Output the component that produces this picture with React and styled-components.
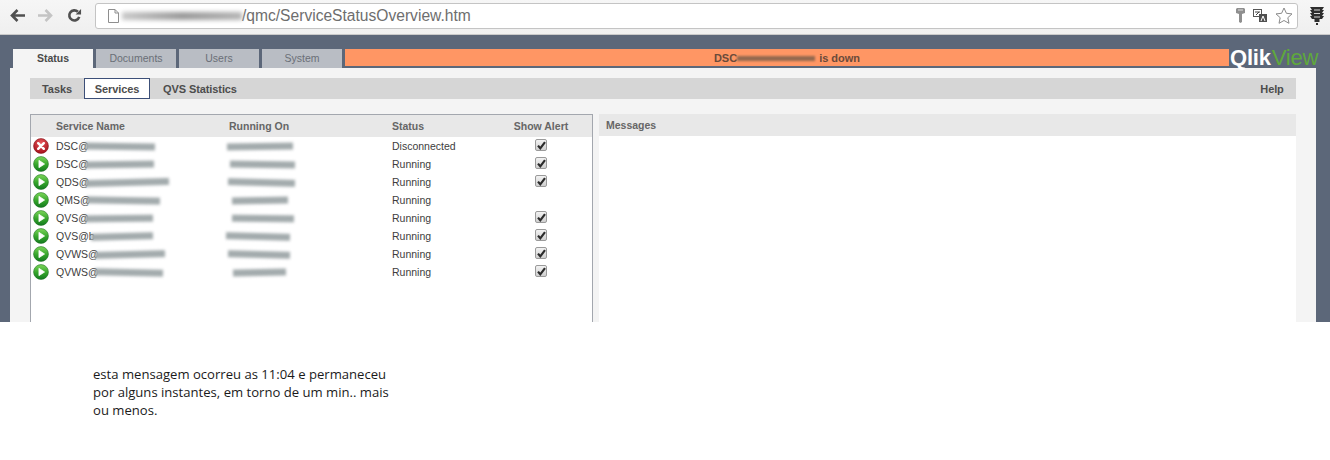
import React from 'react'
import styled, { createGlobalStyle } from 'styled-components'

const GlobalStyle = createGlobalStyle`
  html, body { margin: 0; padding: 0; background: #fff; }
  body { width: 1330px; height: 460px; overflow: hidden; font-family: "Liberation Sans", Arial, sans-serif; }
`

const Toolbar = styled.div`
  height: 35px;
  box-sizing: border-box;
  display: flex;
  align-items: center;
  padding: 0 0 3px 9px;
  background: linear-gradient(#f6f6f6, #efefef);
  border-bottom: 1px solid #c9c9c9;
`
const NavIcons = styled.div`
  width: 86px;
  display: flex;
  gap: 13px;
  align-items: center;
  flex: none;
`
const Omnibox = styled.div`
  width: 1203px;
  height: 26px;
  box-sizing: border-box;
  flex: none;
  display: flex;
  align-items: center;
  padding: 0 4px 0 12px;
  background: #fff;
  border: 1px solid #c4c4c4;
  border-radius: 3px;
`
const Url = styled.span`
  font-size: 15.6px;
  color: #6e6e6e;
  margin-right: auto;
`
const UrlSmudge = styled.span`
  display: inline-block;
  width: 120px;
  height: 8px;
  margin: 0 0 0 3px;
  background: linear-gradient(90deg, #c9c9c9, #9a9a9a 50%, #b5b5b5);
  filter: blur(2px);
`
const OmniIcons = styled.div`
  display: flex;
  align-items: center;
  gap: 8px;
`
const TrafficSlot = styled.div`
  margin-left: 12px;
  display: flex;
`

const Shell = styled.div`
  height: 287px;
  box-sizing: border-box;
  padding: 14px 14px 0 10px;
  background: #5c6779;
  overflow: hidden;
`
const TabRow = styled.div`
  height: 19px;
  display: flex;
  gap: 3px;
  padding-left: 3px;
`
const Tab = styled.div`
  width: 80px;
  height: 19px;
  flex: none;
  line-height: 19px;
  text-align: center;
  font-size: 10.5px;
  color: ${p => (p.$active ? '#4a4a4a' : '#6a6f77')};
  font-weight: ${p => (p.$active ? 'bold' : 'normal')};
  background: ${p => (p.$active ? '#f4f4f4' : '#b9bdc4')};
`
const Banner = styled.div`
  flex: 1;
  height: 17px;
  margin-right: -2px;
  background: #ff9664;
  color: #6b4a3a;
  font-size: 11px;
  font-weight: bold;
  display: flex;
  justify-content: center;
  align-items: center;
`
const BannerSmudge = styled.span`
  display: inline-block;
  width: 78px;
  height: 5px;
  margin: 1px 4px 0 0;
  background: #94694f;
  filter: blur(1.2px);
`
const Logo = styled.div`
  width: 86px;
  flex: none;
  font-size: 22px;
  line-height: 18px;
  color: #fff;
  font-weight: bold;
  white-space: nowrap;
  letter-spacing: -0.2px;
`
const LogoView = styled.span`
  color: #5fa83c;
  font-weight: normal;
  margin-left: 1px;
`
const Panel = styled.div`
  height: 254px;
  box-sizing: border-box;
  padding: 10px 20px 0;
  background: #f4f4f4;
`
const SubNav = styled.div`
  height: 21px;
  display: flex;
  align-items: stretch;
  background: #d6d6d6;
  font-size: 11px;
  font-weight: bold;
  color: #4d4d4d;
`
const SubItem = styled.div`
  display: flex;
  align-items: center;
  justify-content: center;
  box-sizing: border-box;
  width: ${p => p.$width}px;
  background: ${p => (p.$active ? '#fff' : 'transparent')};
  border: ${p => (p.$active ? '1px solid #3c4f78' : 'none')};
  letter-spacing: -0.1px;
`
const Spacer = styled.div`
  flex: 1;
`
const Columns = styled.div`
  margin-top: 15px;
  display: flex;
  gap: 6px;
  height: 208px;
`
const Services = styled.div`
  width: 563px;
  box-sizing: border-box;
  flex: none;
  background: #fff;
  border: 1px solid #a3a7ae;
  border-bottom: none;
`
const HeadRow = styled.div`
  height: 22px;
  display: grid;
  grid-template-columns: 198px 163px 102px 94px;
  align-items: center;
  background: #e8e8e8;
  font-size: 10.5px;
  font-weight: bold;
  color: #666;
`
const Row = styled.div`
  height: 18px;
  display: grid;
  grid-template-columns: 198px 163px 102px 94px;
  align-items: center;
  font-size: 10.5px;
  color: #3d3d3d;
`
const NameCell = styled.div`
  display: flex;
  align-items: center;
  white-space: nowrap;
  padding-left: ${p => (p.$head ? 25 : 2)}px;
`
const StatusIcon = styled.svg`
  width: 16px;
  height: 16px;
  flex: none;
  margin-right: 7px;
`
const Smudge = styled.span`
  display: inline-block;
  width: ${p => p.$width}px;
  height: 7px;
  margin-left: ${p => p.$x}px;
  background: #a3abad;
  filter: blur(1.7px);
  transform: rotate(${p => p.$tilt}deg);
`
const Cell = styled.div`
  white-space: nowrap;
`
const CenterCell = styled.div`
  display: flex;
  justify-content: center;
  white-space: nowrap;
`
const Check = styled.span`
  width: 12px;
  height: 12px;
  box-sizing: border-box;
  margin-top: -2px;
  display: flex;
  align-items: center;
  justify-content: center;
  background: linear-gradient(#f2f2f2, #cfcfcf);
  border: 1px solid #9a9a9a;
  border-radius: 2px;
`
const Messages = styled.div`
  flex: 1;
  background: #fff;
`
const MessagesHead = styled.div`
  height: 22px;
  line-height: 22px;
  padding-left: 7px;
  background: #e8e8e8;
  font-size: 10.5px;
  font-weight: bold;
  color: #666;
`
const Note = styled.p`
  margin: 43px 0 0 93px;
  width: 305px;
  font-family: "Open Sans", sans-serif;
  font-size: 13.1px;
  line-height: 18px;
  color: #1a1a1a;
`

const rows = [
  { name: 'DSC@', w: 70, hostX: -2, hostW: 66, tilt: 0.8, status: 'Disconnected', alert: true, down: true },
  { name: 'DSC@', w: 69, hostX: 1, hostW: 65, tilt: -0.8, status: 'Running', alert: true },
  { name: 'QDS@', w: 84, hostX: -1, hostW: 67, tilt: -1.5, status: 'Running', alert: true },
  { name: 'QMS@', w: 73, hostX: 3, hostW: 56, tilt: 1, status: 'Running', alert: false },
  { name: 'QVS@', w: 68, hostX: 3, hostW: 62, tilt: -0.6, status: 'Running', alert: true },
  { name: 'QVS@b', w: 62, hostX: -3, hostW: 64, tilt: -1.5, status: 'Running', alert: true },
  { name: 'QVWS@', w: 70, hostX: -1, hostW: 62, tilt: -1.5, status: 'Running', alert: true },
  { name: 'QVWS@', w: 68, hostX: 4, hostW: 53, tilt: 1.2, status: 'Running', alert: true },
]

const DownIcon = () => (
  <StatusIcon viewBox="0 0 17 17">
    <defs>
      <radialGradient id="redBall" cx="50%" cy="30%" r="70%">
        <stop offset="0" stopColor="#e8595c" />
        <stop offset="1" stopColor="#a50f1a" />
      </radialGradient>
    </defs>
    <circle cx="8.5" cy="8.5" r="7.9" fill="url(#redBall)" stroke="#7d1118" strokeWidth="0.6" />
    <path d="M5.500 5.500l6 6M11.500 5.500l-6 6" stroke="#fff" strokeWidth="2.6" strokeLinecap="round" />
  </StatusIcon>
)

const RunIcon = () => (
  <StatusIcon viewBox="0 0 17 17">
    <defs>
      <linearGradient id="greenBall" x1="0" y1="0" x2="0" y2="1">
        <stop offset="0" stopColor="#7cd65a" />
        <stop offset="0.55" stopColor="#35a52b" />
        <stop offset="1" stopColor="#127a1e" />
      </linearGradient>
    </defs>
    <circle cx="8.5" cy="8.5" r="7.9" fill="url(#greenBall)" stroke="#1c6f22" strokeWidth="0.6" />
    <path d="M6.300 4.600l6 3.900-6 3.900z" fill="#fff" stroke="#fff" strokeWidth="0.8" strokeLinejoin="round" />
  </StatusIcon>
)

const Tick = () => (
  <svg width="9" height="9" viewBox="0 0 9 9">
    <path d="M1 4.600l2.300 2.700L8 1.200" fill="none" stroke="#2b2b2b" strokeWidth="2.2" />
  </svg>
)

const App = () => (
  <>
    <GlobalStyle />
    <Toolbar>
      <NavIcons>
        <svg width="16" height="15" viewBox="0 0 16 15">
          <path d="M16 7.500H3M8.500 2L3 7.500l5.500 5.500" fill="none" stroke="#505050" strokeWidth="2.6" />
        </svg>
        <svg width="16" height="15" viewBox="0 0 16 15">
          <path d="M0 7.500h13M7.500 2L13 7.500 7.500 13" fill="none" stroke="#c4c4c4" strokeWidth="2.6" />
        </svg>
        <svg width="15" height="15" viewBox="0 0 16 16">
          <path d="M13 9.500A5.400 5.400 0 1 1 11.600 4" fill="none" stroke="#505050" strokeWidth="2.8" />
          <path d="M9.200 6.800H15V1z" fill="#505050" />
        </svg>
      </NavIcons>
      <Omnibox>
        <svg width="11" height="14" viewBox="0 0 11 14">
          <path d="M.5.5h6.500l3.500 3.500v9.500h-10zM7 .5V4h3.500" fill="#fff" stroke="#8e8e8e" />
        </svg>
        <UrlSmudge />
        <Url>/qmc/ServiceStatusOverview.htm</Url>
        <OmniIcons>
          <svg width="9" height="15" viewBox="0 0 9 15">
            <path d="M1 0h7l1 1v4L6 6v8l-1.500 1L3 14V6L0 5V1z" fill="#8f8f8f" />
            <path d="M2 2h5" stroke="#ddd" />
          </svg>
          <svg width="14" height="13" viewBox="0 0 14 13">
            <rect x="0.500" y="0.500" width="8" height="7" fill="#fff" stroke="#555" />
            <rect x="6" y="5" width="8" height="8" fill="#505050" />
            <path d="M2 3h5M3 6l3-3" stroke="#444" fill="none" />
            <path d="M8 12l2-5 2 5" stroke="#fff" fill="none" />
          </svg>
          <svg width="18" height="17" viewBox="0 0 18 17">
            <path d="M9 1l2.400 5.300 5.600.6-4.200 3.800 1.200 5.600L9 13.500l-5 2.800 1.200-5.600L1 6.900l5.600-.6z" fill="#fff" stroke="#8a8a8a" />
          </svg>
        </OmniIcons>
      </Omnibox>
      <TrafficSlot>
        <svg width="14" height="20" viewBox="0 0 14 20">
          <path d="M0 1h14l-2 3h2l-2 3h2l-2 3h2l-2 3H9.500v3h-5v-3H2l-2-3h2L0 7h2L0 4h2z" fill="#2e2e2e" />
          <path d="M4 4h6M4 7.500h6M4 11h6" stroke="#d6d6d6" />
          <rect x="6" y="17" width="2" height="2" fill="#2e2e2e" />
        </svg>
      </TrafficSlot>
    </Toolbar>
    <Shell>
      <TabRow>
        <Tab $active>Status</Tab>
        <Tab>Documents</Tab>
        <Tab>Users</Tab>
        <Tab>System</Tab>
        <Banner>
          DSC<BannerSmudge />is down
        </Banner>
        <Logo>
          Qlik<LogoView>View</LogoView>
        </Logo>
      </TabRow>
      <Panel>
        <SubNav>
          <SubItem $width={54}>Tasks</SubItem>
          <SubItem $width={66} $active>Services</SubItem>
          <SubItem $width={100}>QVS Statistics</SubItem>
          <Spacer />
          <SubItem $width={48}>Help</SubItem>
        </SubNav>
        <Columns>
          <Services>
            <HeadRow>
              <NameCell $head>Service Name</NameCell>
              <Cell>Running On</Cell>
              <Cell>Status</Cell>
              <CenterCell>Show Alert</CenterCell>
            </HeadRow>
            {rows.map((row, id) => (
              <Row key={id}>
                <NameCell>
                  {row.down ? <DownIcon /> : <RunIcon />}
                  {row.name}
                  <Smudge $x={-4} $width={row.w} $tilt={row.tilt} />
                </NameCell>
                <Cell><Smudge $x={row.hostX} $width={row.hostW} $tilt={-row.tilt} /></Cell>
                <Cell>{row.status}</Cell>
                <CenterCell>{row.alert && <Check><Tick /></Check>}</CenterCell>
              </Row>
            ))}
          </Services>
          <Messages>
            <MessagesHead>Messages</MessagesHead>
          </Messages>
        </Columns>
      </Panel>
    </Shell>
    <Note>
      esta mensagem ocorreu as 11:04 e permaneceu por alguns instantes, em torno de um min.. mais ou menos.
    </Note>
  </>
)

export default App
